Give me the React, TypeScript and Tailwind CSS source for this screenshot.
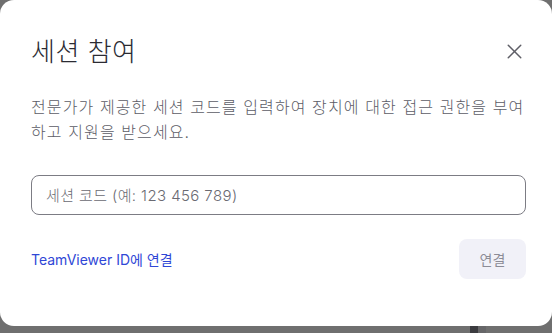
import { X } from "lucide-react";

const font = {
  fontFamily: '"Inter", "Noto Sans CJK KR", sans-serif',
};

export default function App() {
  return (
    <div
      className="relative w-[552px] h-[333px] overflow-hidden bg-[#6f6f6f]"
      style={font}
    >
      {/* backdrop bits peeking under the dialog */}
      <div className="absolute left-[470px] top-[320px] w-[8px] h-[13px] bg-[#3b3b3f]" />
      <div className="absolute left-[478px] top-[320px] w-[8px] h-[13px] bg-[#666668]" />

      <div className="relative w-[552px] h-[326px] bg-white rounded-[14px] pl-[31px] pr-[26px] pt-[32px] flex flex-col">
        <div className="flex items-start justify-between">
          <h1 className="text-[26px] leading-[40px] text-[#2b2b33] font-light tracking-[0.5px]">
            세션 참여
          </h1>
          <button className="mt-[6px] mr-[-1px] w-[26px] h-[26px] flex items-center justify-center text-[#5e5e66]">
            <X size={25} strokeWidth={1.4} />
          </button>
        </div>

        <p className="mt-[23px] text-[16px] leading-[25px] text-[#5c5c66] font-light tracking-[1.1px] whitespace-nowrap">
          전문가가 제공한 세션 코드를 입력하여 장치에 대한 접근 권한을 부여
          <br />
          하고 지원을 받으세요.
        </p>

        <input
          className="mt-[30px] h-[40px] w-full rounded-[8px] border border-[#7c7c84] px-[14px] text-[15px] font-light tracking-[0.4px] text-[#2b2b33] placeholder:text-[#6a6a72] outline-none"
          placeholder="세션 코드 (예: 123 456 789)"
        />

        <div className="mt-[24px] flex items-center justify-between">
          <a className="text-[14px] text-[#2f47d6] cursor-pointer">
            TeamViewer ID에 연결
          </a>
          <button className="w-[67px] h-[40px] rounded-[8px] bg-[#f1f1f8] text-[14px] text-[#8c8c96]">
            연결
          </button>
        </div>
      </div>
    </div>
  );
}
